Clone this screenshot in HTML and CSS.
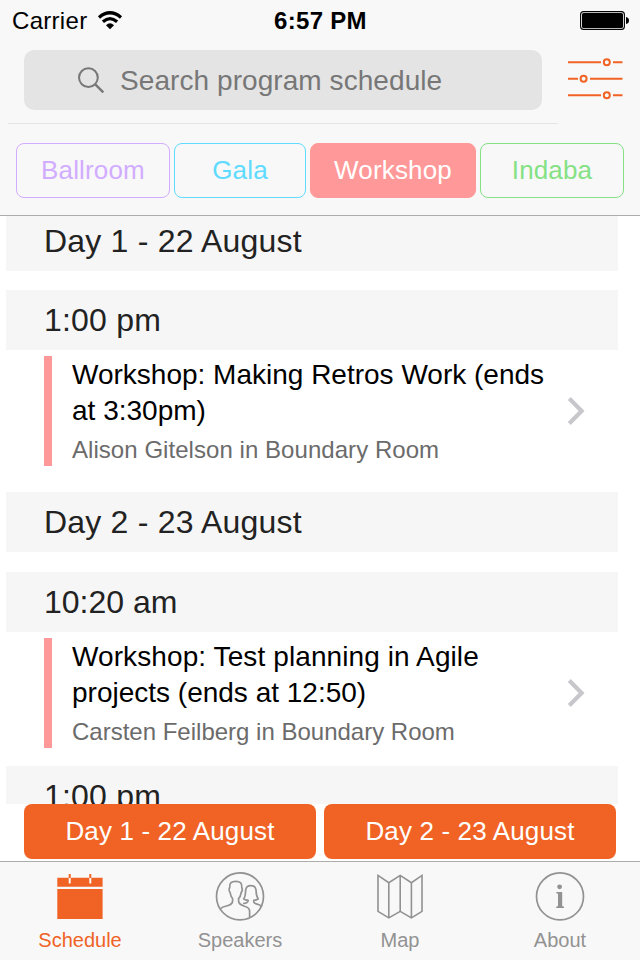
FILE: index.html
```html
<!DOCTYPE html>
<html lang="en">
<head>
<meta charset="utf-8">
<title>Program schedule</title>
<link rel="stylesheet" href="styles.css">
</head>
<body>
<div class="app">
  <header class="top">
    <div class="status">
      <div class="carrier"><span class="carrier-name">Carrier</span>
        <svg width="26" height="20" viewBox="0 0 26 20"><g fill="none" stroke="#000" stroke-width="3.3"><path d="M2 7.4Q13 -1.8 24 7.4"/><path d="M5.9 11.7Q13 5.6 20.1 11.7"/></g><path d="M9 15.2Q13 11.2 17 15.2L13 19.2Z"/></svg>
      </div>
      <div class="clock">6:57 PM</div>
      <div class="battery"><svg width="50" height="20" viewBox="0 0 50 20"><rect x=".6" y=".6" width="43.8" height="17.8" rx="3" fill="none" stroke="#000" stroke-width="1.1"/><rect x="2" y="2" width="41" height="15" rx="1.6"/><path d="M46 6Q49 6.5 49 9.5T46 13Z"/></svg></div>
    </div>
    <div class="search-row">
      <div class="search">
        <svg width="28" height="28" viewBox="0 0 28 28"><g fill="none" stroke="#777" stroke-width="2"><circle cx="11.4" cy="11.6" r="9.4"/><path d="M18 18.2L26.3 26.4" stroke-width="2.4"/></g></svg>
        <span>Search program schedule</span>
      </div>
      <svg class="filter" width="56" height="44" viewBox="0 0 56 44"><g fill="none" stroke="#f06325" stroke-width="2"><path d="M0 5.2H33M45 5.2H54.5M0 21.7H10M22 21.7H54.5M0 38.2H33M45 38.2H54.5"/><circle cx="38.8" cy="5.3" r="3"/><circle cx="15.6" cy="21.7" r="3"/><circle cx="38.8" cy="38.2" r="3"/></g></svg>
    </div>
    <div class="divider"></div>
    <nav class="chips">
      <span class="chip ballroom">Ballroom</span>
      <span class="chip gala">Gala</span>
      <span class="chip workshop">Workshop</span>
      <span class="chip indaba">Indaba</span>
    </nav>
  </header>
  <main class="list">
    <h2 class="band">Day 1 - 22 August</h2>
    <h3 class="band hour">1:00 pm</h3>
    <article class="session">
      <div class="info">
        <p class="title">Workshop: Making Retros Work (ends<br>at 3:30pm)</p>
        <p class="speaker">Alison Gitelson in Boundary Room</p>
      </div>
      <svg class="chevron" width="18" height="28" viewBox="0 0 18 28"><path d="M2.3 1.5L14.6 14L2.3 26.5" fill="none" stroke="#c7c7cc" stroke-width="4.2"/></svg>
    </article>
    <h2 class="band day2">Day 2 - 23 August</h2>
    <h3 class="band hour2">10:20 am</h3>
    <article class="session">
      <div class="info">
        <p class="title"><span class="wide">Workshop: Test planning in Agile</span><br>projects (ends at 12:50)</p>
        <p class="speaker second">Carsten Feilberg in Boundary Room</p>
      </div>
      <svg class="chevron" width="18" height="28" viewBox="0 0 18 28"><path d="M2.3 1.5L14.6 14L2.3 26.5" fill="none" stroke="#c7c7cc" stroke-width="4.2"/></svg>
    </article>
    <h3 class="band last">1:00 pm</h3>
  </main>
  <div class="days">
    <span class="day">Day 1 - 22 August</span>
    <span class="day">Day 2 - 23 August</span>
  </div>
  <footer class="tabs">
    <div class="tab active">
      <svg width="50" height="50" viewBox="0 0 50 50"><path fill="#f06325" d="M2.3 5.7H47.6V14.7H2.3ZM2.3 17H47.6V47H2.3Z"/><path d="M14.7 5.5V11.6M35.3 5.5V11.6" stroke="#f8f8f8" stroke-width="2"/><path d="M14.7 2V6M35.3 2V6" stroke="#f06325" stroke-width="2"/></svg>
      <span>Schedule</span>
    </div>
    <div class="tab">
      <svg width="50" height="50" viewBox="0 0 50 50"><g fill="none" stroke="#929292" stroke-width="1.7" stroke-linejoin="round"><circle cx="25" cy="24.4" r="23.5"/><path d="M5.5 36.8Q7 35 11.5 34Q17 32.8 17.6 29.5V26.5C15.8 24.8 15.5 22.5 15.1 20.5C13.8 19 14 16.5 14.7 15.5C14.3 11 16.5 9.3 20.7 9.3S27.2 11 26.8 15.5C27.5 17 27.4 19 26.2 20.5C25.8 23 25.3 25 23.6 26.5V29.5Q24.2 32.6 29.5 34.2Q34.6 35.5 34.6 39V45"/><path d="M28 31.5Q33 31.4 33.2 28.3Q30.5 28 28.7 27C31 24 30.4 20 30.7 17.8C31.2 14.7 32.8 13.6 35.8 13.6S40.6 14.7 41 17.8C41.2 20.3 41 24 43.2 27Q41.5 28 38.8 28.3V30.2Q39.5 31.5 42.8 32.3Q45.2 33 46.3 34.6"/></g></svg>
      <span>Speakers</span>
    </div>
    <div class="tab">
      <svg width="50" height="50" viewBox="0 0 50 50"><path fill="none" stroke="#929292" stroke-width="1.6" d="M3 3.4L13.8 10.7L25.2 3.4L36.4 10.7L47 3.4V39.4L36.4 45.9L25.2 39.4L13.8 45.9L3 39.4ZM13.8 10.7V45.9M25.2 3.4V39.4M36.4 10.7V45.9"/></svg>
      <span>Map</span>
    </div>
    <div class="tab">
      <svg width="50" height="50" viewBox="0 0 50 50"><circle cx="25" cy="24.4" r="23.5" fill="none" stroke="#929292" stroke-width="1.7"/><circle cx="24.6" cy="14.8" r="2.4" fill="#929292"/><path fill="#929292" d="M21.3 20H27.2V34L29 34.8V36H21.2V34.8L23 34V21.8L21.3 21.2Z"/></svg>
      <span>About</span>
    </div>
  </footer>
</div>
</body>
</html>
```
FILE: styles.css
```css
* { box-sizing: border-box; }
body { margin: 0; font-family: "Liberation Sans", Arial, sans-serif; background: #fff; }
h2, h3, p { margin: 0; font-weight: normal; }
svg { display: block; flex: none; }
.app { width: 640px; height: 960px; display: flex; flex-direction: column; overflow: hidden; }
.top { height: 216px; flex: none; background: #f8f8f8; border-bottom: 1px solid #acacac; }
.status { height: 50px; padding: 1px 10px 9px 12px; display: grid; grid-template-columns: 1fr auto 1fr; align-items: center; font-size: 24px; line-height: 40px; }
.carrier { display: flex; gap: 10px; align-items: center; }
.carrier-name { letter-spacing: 0.3px; }
.carrier svg { margin-top: -3px; }
.clock { font-weight: bold; letter-spacing: 0.3px; margin-left: -1px; }
.battery { justify-self: end; }
.search-row { display: flex; height: 60px; padding-left: 24px; }
.search { width: 518px; height: 60px; border-radius: 10px; background: #e4e4e4; color: #777; font-size: 28px; letter-spacing: 0.07px; line-height: 64px; display: flex; align-items: center; padding-left: 53px; gap: 15px; }
.search span { height: 62px; }
.filter { margin: 7px 0 0 26px; }
.divider { width: 550px; height: 1px; background: #e5e5e5; margin: 13px 0 19px 8px; }
.chips { display: flex; gap: 4px; padding: 0 16px; }
.chip { height: 55px; border: 1px solid; border-radius: 8px; text-align: center; font-size: 26px; letter-spacing: 0.15px; line-height: 52px; }
.ballroom { width: 154px; color: #d2acff; }
.gala { width: 132px; color: #5fdbff; }
.workshop { width: 166px; color: #fff; background: #ff9999; border-color: #ff9999; }
.indaba { width: 144px; color: #84e184; }
.list { height: 588px; flex: none; overflow: hidden; }
.band { width: 612px; height: 60px; margin-left: 6px; padding-left: 38px; background: #f6f6f6; color: #222; font-size: 32px; letter-spacing: 0.2px; line-height: 61px; }
.list .band:first-child { margin-top: -5px; }
.hour { margin-top: 19px; }
.day2 { margin-top: 26px; }
.hour2 { margin-top: 20px; letter-spacing: 0; }
.last { margin-top: 18px; }
.session { height: 110px; margin: 6px 0 0 44px; border-left: 8px solid #ff9999; display: flex; align-items: center; }
.info { width: 515px; height: 110px; padding-left: 20px; }
.title { font-size: 28px; line-height: 36px; padding-top: 1px; color: #000; }
.wide { letter-spacing: 0.1px; }
.speaker { font-size: 24px; line-height: 30px; margin-top: 6px; letter-spacing: 0.05px; color: #6b6b6b; }
.speaker.second { letter-spacing: 0; }
.days { display: flex; gap: 8px; height: 57px; flex: none; padding: 0 24px; }
.day { width: 292px; height: 55px; border-radius: 8px; background: #f06325; color: #fff; text-align: center; font-size: 26px; letter-spacing: 0.15px; line-height: 55px; }
.tabs { height: 99px; flex: none; border-top: 1px solid #acacac; background: #f8f8f8; display: grid; grid-template-columns: repeat(4, 1fr); }
.tab { display: flex; flex-direction: column; align-items: center; padding-top: 10px; font-size: 20px; line-height: 24px; color: #929292; }
.tab span { margin-top: 6px; }
.active { color: #f06325; }
```
